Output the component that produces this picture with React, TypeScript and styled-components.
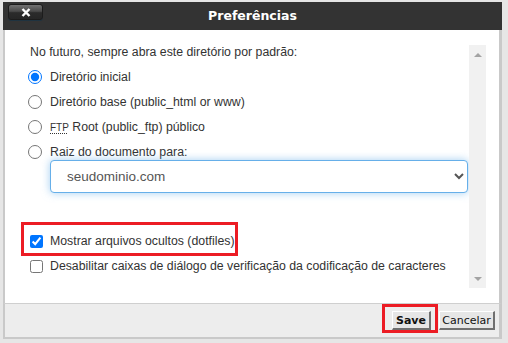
import React, { useState } from 'react';
import styled, { createGlobalStyle } from 'styled-components';

const GlobalStyle = createGlobalStyle`
    body {
        margin: 0;
        background: #e6e6e6;
        font-family: "Liberation Sans", Arial, sans-serif;
    }
`;

const Page = styled.div`
    height: 343px;
    box-sizing: border-box;
    padding: 2px 0 0 3px;
    overflow: hidden;
`;

const Dialog = styled.div`
    width: 499px;
    display: flex;
    flex-direction: column;
`;

const TitleBar = styled.div`
    height: 28px;
    background: #333333;
    display: grid;
    grid-template-columns: 1fr auto 1fr;
    align-items: start;
`;

const CloseButton = styled.button`
    grid-column: 1;
    justify-self: start;
    margin: 2px 0 0 5px;
    width: 35px;
    height: 16px;
    padding: 0;
    border: 1px solid #1c1c1c;
    border-radius: 3px;
    background: linear-gradient(#727272, #4a4a4a 45%, #2b2b2b 55%, #262626);
    box-shadow: 0 1px 0 #1f3340;
    display: flex;
    align-items: center;
    justify-content: center;
    cursor: pointer;
`;

const Title = styled.h1`
    grid-column: 2;
    margin: 6px 0 0;
    font-family: "DejaVu Sans", Verdana, sans-serif;
    font-size: 12.5px;
    line-height: 16px;
    font-weight: bold;
    color: #ffffff;
`;

const Body = styled.div`
    height: 273px;
    display: flex;
    background: #ffffff;
    border-left: 2px solid #c9c9c9;
    border-right: 3px solid #c9c9c9;
`;

const Content = styled.div`
    flex: 1;
    padding: 14px 0 0 25px;
    display: flex;
    flex-direction: column;
    color: #333333;
    font-size: 12.3px;
`;

const Intro = styled.p`
    margin: 0 0 9px;
    line-height: 16px;
`;

const OptionList = styled.div`
    display: flex;
    flex-direction: column;
    gap: 9px;
`;

const Option = styled.label`
    display: flex;
    align-items: center;
    height: 16px;
    line-height: 16px;
    gap: ${p => (p.$check ? '7px' : '8px')};
    margin-left: ${p => (p.$check ? '0' : '-2px')};
    cursor: pointer;
`;

const Radio = styled.input.attrs({ type: 'radio' })`
    width: 14px;
    height: 14px;
    margin: 0;
`;

const Check = styled.input.attrs({ type: 'checkbox' })`
    width: 13px;
    height: 13px;
    margin: 0;
`;

const Abbr = styled.abbr`
    font-size: 10px;
    text-decoration: underline dotted;
    text-underline-offset: 2px;
`;

const Select = styled.select`
    margin-left: 20px;
    width: 418px;
    height: 33px;
    padding: 0 8px 0 12px;
    border: 1px solid #66afe9;
    border-radius: 4px;
    box-shadow: 0 0 8px rgba(102, 175, 233, 0.6);
    background: #ffffff;
    color: #555555;
    font-family: "Liberation Sans", Arial, sans-serif;
    font-size: 13.5px;
    outline: none;
`;

const Highlight = styled.div`
    align-self: flex-start;
    margin: 29px 0 0 -9px;
    padding: 8px 0 4px 6px;
    border: 3px solid #ec1c24;
`;

const SecondCheck = styled.div`
    margin-top: 2px;
`;

const ScrollTrack = styled.div`
    width: 17px;
    margin: 15px 13px 15px 0;
    background: #f1f1f1;
    display: flex;
    flex-direction: column;
    align-items: center;
    justify-content: space-between;
    padding: 8px 0 7px;
    box-sizing: border-box;
`;

const Arrow = styled.span`
    width: 0;
    height: 0;
    border-left: 4px solid transparent;
    border-right: 4px solid transparent;
    ${p => (p.$down ? 'border-top: 4px solid #a3a3a3;' : 'border-bottom: 4px solid #a3a3a3;')}
`;

const Footer = styled.div`
    height: 33px;
    display: flex;
    justify-content: flex-end;
    align-items: flex-start;
    padding-right: 4px;
    background: #ededed;
    border-top: 1px solid #cfcfcf;
    border-left: 2px solid #c9c9c9;
    border-right: 3px solid #c9c9c9;
    border-bottom: 2px solid #c9c9c9;
`;

const SaveHighlight = styled.div`
    padding: 4px 4px 0 7px;
    border: 3px solid #ec1c24;
    display: flex;
`;

const Button = styled.button`
    height: 19px;
    width: ${p => p.$w}px;
    margin-top: ${p => p.$top || 0}px;
    margin-left: ${p => p.$left || 0}px;
    padding: 0;
    box-sizing: border-box;
    background: #e6e6e6;
    border-style: solid;
    border-width: 1px 2px 2px 1px;
    border-color: #ffffff #707070 #707070 #ffffff;
    color: #111111;
    font-family: "DejaVu Sans", Verdana, sans-serif;
    font-size: 11px;
    font-weight: ${p => (p.$bold ? 'bold' : 'normal')};
    cursor: pointer;
`;

const App: React.FC = () => {
    const [root, setRoot] = useState('home');
    const [dotfiles, setDotfiles] = useState(true);
    const [noCharset, setNoCharset] = useState(false);

    return (
        <Page>
            <GlobalStyle />
            <Dialog>
                <TitleBar>
                    <CloseButton aria-label="Fechar">
                        <svg width="10" height="9" viewBox="0 0 10 9">
                            <path d="M1.5 1 L8.5 8 M8.5 1 L1.5 8" stroke="#ffffff" strokeWidth="2.4" />
                        </svg>
                    </CloseButton>
                    <Title>Preferências</Title>
                </TitleBar>
                <Body>
                    <Content>
                        <Intro>No futuro, sempre abra este diretório por padrão:</Intro>
                        <OptionList>
                            <Option>
                                <Radio name="root" checked={root === 'home'} onChange={() => setRoot('home')} />
                                Diretório inicial
                            </Option>
                            <Option>
                                <Radio name="root" checked={root === 'www'} onChange={() => setRoot('www')} />
                                Diretório base (public_html or www)
                            </Option>
                            <Option>
                                <Radio name="root" checked={root === 'ftp'} onChange={() => setRoot('ftp')} />
                                <span><Abbr title="File Transfer Protocol">FTP</Abbr> Root (public_ftp) público</span>
                            </Option>
                            <Option>
                                <Radio name="root" checked={root === 'doc'} onChange={() => setRoot('doc')} />
                                Raiz do documento para:
                            </Option>
                        </OptionList>
                        <Select defaultValue="seudominio.com">
                            <option>seudominio.com</option>
                        </Select>
                        <Highlight>
                            <Option $check>
                                <Check checked={dotfiles} onChange={() => setDotfiles(!dotfiles)} />
                                Mostrar arquivos ocultos (dotfiles)
                            </Option>
                        </Highlight>
                        <SecondCheck>
                            <Option $check>
                                <Check checked={noCharset} onChange={() => setNoCharset(!noCharset)} />
                                Desabilitar caixas de diálogo de verificação da codificação de caracteres
                            </Option>
                        </SecondCheck>
                    </Content>
                    <ScrollTrack>
                        <Arrow />
                        <Arrow $down />
                    </ScrollTrack>
                </Body>
                <Footer>
                    <SaveHighlight>
                        <Button $w={39} $bold>Save</Button>
                    </SaveHighlight>
                    <Button $w={56} $top={7} $left={1}>Cancelar</Button>
                </Footer>
            </Dialog>
        </Page>
    );
};

export default App;
